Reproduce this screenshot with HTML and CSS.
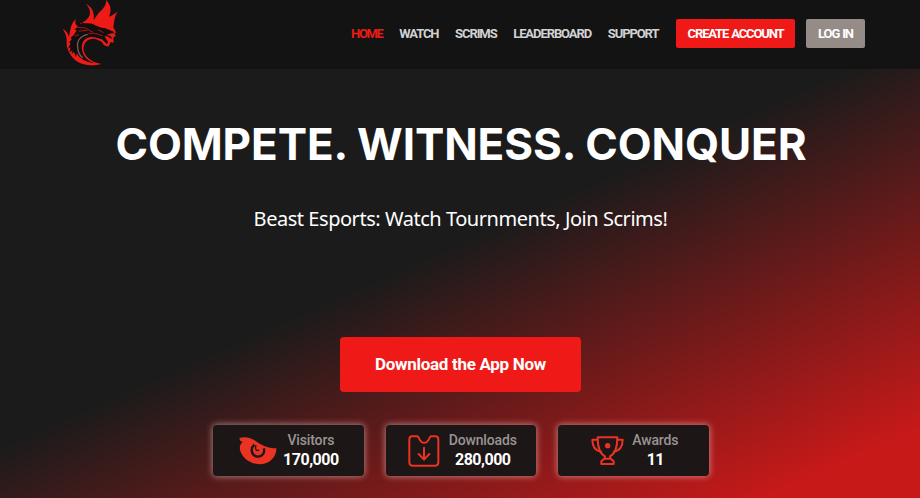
FILE: index.html
```html
<!DOCTYPE html>
<html lang="en">
<head>
<meta charset="utf-8">
<title>Beast Esports</title>
<link rel="stylesheet" href="styles.css">
</head>
<body>
<header class="topbar">
  <a class="logo" href="#" aria-label="Beast Esports">
    <svg viewBox="0 0 180 204" width="60" height="68">
      <path class="flame" d="M50 184C30 168 18 146 20 124C21 108 14 96 8 86C18 91 24 99 26 110C32 98 28 76 47 57C44 70 48 78 54 76C60 70 68 68 76 62C94 48 95 31 78 11C97 22 104 38 101 60C108 52 112 42 125 30C137 18 139 8 138 0C150 12 157 28 147 50C155 48 162 40 174 35C163 45 163 66 160 82L168 97L163 103L168 107L160 112L161 128L152 126L145 140L132 136L125 125L107 117C85 111 67 130 71 152C77 176 101 187 124 192C98 200 68 196 50 184Z"/>
      <path class="ink" d="M34 163L38 152L28 156L32 142L24 146L32 130L27 128L36 116L31 114L42 104L50 91L43 88C58 82 50 72 56 64L60 72L66 72L62 64C72 74 86 68 98 72C110 78 122 84 134 84L163 96L161 100L148 101L140 105L151 107L157 118L141 109L133 109L144 125L141 133L126 118L103 112C78 107 62 125 66 150C70 172 86 185 104 189C80 188 60 178 50 160L48 172L42 156Z"/>
      <path class="cut" d="M51 82L76 84L99 97M56 93L82 91M114 89L131 98M44 108L57 104M85 102C98 96 113 103 128 107"/>
      <path class="belly" d="M83 103C61 108 50 123 53 143C54 158 60 167 68 174"/>
    </svg>
  </a>
  <nav class="nav">
    <a class="active" href="#">HOME</a>
    <a href="#">WATCH</a>
    <a href="#">SCRIMS</a>
    <a href="#">LEADERBOARD</a>
    <a href="#">SUPPORT</a>
  </nav>
  <a class="btn create" href="#"><span>CREATE ACCOUNT</span></a>
  <a class="btn login" href="#"><span>LOG IN</span></a>
</header>
<main class="hero">
  <h1>COMPETE. WITNESS. CONQUER</h1>
  <p class="tagline">Beast Esports: Watch Tournments, Join Scrims!</p>
  <a class="download" href="#">Download the App Now</a>
  <section class="stats">
    <article class="stat visitors">
      <svg width="38" height="28" viewBox="0 0 114 84"><path fill="#ea3323" d="M1 3C20-2 37 3 53 14C74 28 91 34 112 34C113 58 94 80 65 82C36 82 9 64 3 38C1 29 4 20 12 14C6 15 2 10 1 3Z"/><path class="ring" d="M46 23C32 36 38 56 55 59C70 60 79 46 74 34"/><path class="ring thin" d="M51 25C47 36 52 43 60 39"/></svg>
      <div><span>Visitors</span><strong>170,000</strong></div>
    </article>
    <article class="stat downloads">
      <svg class="line" width="32" height="32" viewBox="0 0 96 96"><path d="M12 4H28C30 4 31 7 33 10C41 28 56 28 64 10C66 7 67 4 69 4H82Q91 4 91 14V82Q91 92 82 92H13Q4 92 4 82V14Q4 4 12 4ZM48 38V73M32 57L48 74L64 57"/></svg>
      <div><span>Downloads</span><strong>280,000</strong></div>
    </article>
    <article class="stat awards">
      <svg class="line" width="33" height="30" viewBox="0 0 99 90"><path d="M20 4H79C79 40 68 56 57 61L59 68L68 76V84H31V76L40 68L42 61C31 56 20 40 20 4ZM20 11H4C4 30 13 44 31 48M79 11H95C95 30 86 44 68 48M40 68H59"/><circle cx="50" cy="29" r="8" fill="#ea3323" stroke="none"/></svg>
      <div><span>Awards</span><strong>11</strong></div>
    </article>
  </section>
</main>
</body>
</html>
```
FILE: styles.css
```css
* { box-sizing: border-box; }
body { margin: 0; background: #1b1b1b; font-family: Roboto, sans-serif; color: #fff; }
a { color: inherit; text-decoration: none; }
.topbar { display: flex; align-items: flex-start; height: 69px; padding-left: 60px; background: #131313; font-weight: 700; font-size: 13px; }
.logo { width: 291px; height: 68px; }
.logo svg { display: block; }
.flame { fill: #ec1b17; }
.ink { fill: #130e0e; }
.cut { fill: none; stroke: #a51614; stroke-width: 3; }
.belly { fill: none; stroke: #765c5a; stroke-width: 4; }
.nav { display: flex; gap: 16.6px; width: 325px; height: 67px; align-items: center; color: #d2d2d2; letter-spacing: -1.08px; white-space: nowrap; }
.nav .active { color: #ec1b17; letter-spacing: -1.3px; }
.btn { display: flex; align-items: center; justify-content: center; height: 29px; margin-top: 19px; border-radius: 2px; letter-spacing: -1.15px; word-spacing: 1px; white-space: nowrap; }
.create { width: 119px; background: #ef1a17; }
.login { width: 59px; margin-left: 11px; background: #958b87; }
.hero { display: flex; flex-direction: column; align-items: center; height: 429px; padding-top: 48px; background: linear-gradient(156deg, #1b1b1b 45%, #c81919 92%); }
h1 { margin: 0 0 0 2px; font: 700 44px/54px Inter, sans-serif; letter-spacing: -.1px; white-space: nowrap; }
.tagline { margin: 34px 0 0 1px; font: 400 20px/28px "Noto Sans", sans-serif; letter-spacing: -.46px; white-space: nowrap; }
.download { display: flex; align-items: center; justify-content: center; width: 241px; height: 55px; padding: 0 0 1px 1px; margin-top: 104px; border-radius: 4px; background: #ef1a17; font-size: 17px; font-weight: 700; letter-spacing: -.3px; }
.stats { display: flex; gap: 22px; margin: 33px 0 0 2px; }
.stat { display: flex; width: 150.6px; height: 51px; border-radius: 4px; background: #1d1616; box-shadow: 0 0 6px 1px rgba(255, 210, 210, .5); }
.stat div { display: flex; flex-direction: column; align-items: center; font-size: 14px; line-height: 20px; padding-top: 5px; }
.stat span { color: #999493; font-weight: 500; letter-spacing: -.15px; }
.stat strong { font-size: 16px; letter-spacing: -.5px; }
.visitors svg { margin: 12px 6px 0 26px; }
.downloads svg { margin: 10px 9px 0 22px; }
.awards svg { margin: 11px 8px 0 33px; }
.line { fill: none; stroke: #ea3323; stroke-width: 6; stroke-linejoin: round; stroke-linecap: round; }
.ring { fill: none; stroke: #1d1616; stroke-width: 7; }
.thin { stroke-width: 4; }
```
